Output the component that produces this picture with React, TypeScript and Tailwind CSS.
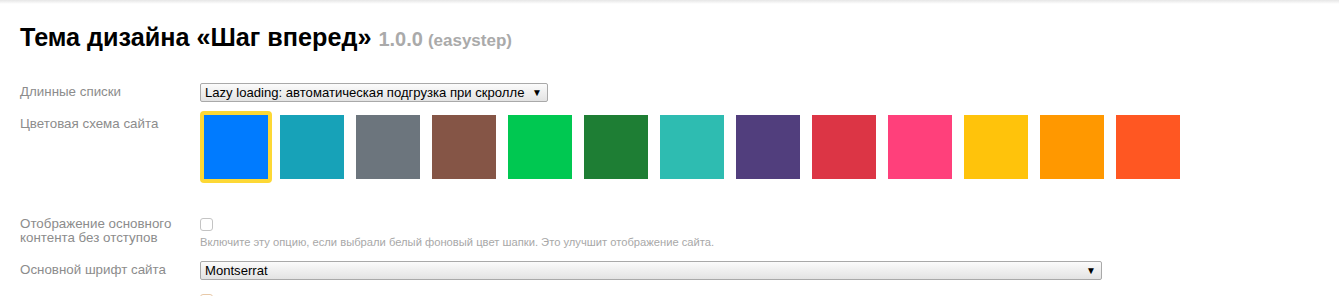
const colors = [
  '#007bff',
  '#17a2b8',
  '#6c757d',
  '#855546',
  '#00c851',
  '#1e7e34',
  '#2ebcb1',
  '#513e7d',
  '#dc3545',
  '#ff407b',
  '#ffc30b',
  '#ff9800',
  '#ff5722',
];

const FakeSelect = ({ value, className }: { value: string; className: string }) => (
  <div
    className={`flex items-center justify-between h-[19px] pl-[4px] pr-[5px] border border-[#a9a9a9] rounded-[2px] bg-gradient-to-b from-[#fbfbfb] to-[#e3e3e3] text-[13.1px] leading-none text-black whitespace-nowrap ${className}`}
  >
    <span>{value}</span>
    <span className="text-[10px] leading-none">▼</span>
  </div>
);

const Checkbox = ({ className = '' }: { className?: string }) => (
  <div className={`w-[13px] h-[13px] border border-[#c4c4c4] rounded-[3px] bg-white ${className}`} />
);

export default function App() {
  return (
    <div className="w-[1339px] h-[296px] overflow-hidden bg-white font-['Liberation_Sans',Arial,sans-serif]">
      <div className="h-[4px] bg-gradient-to-b from-[#e6e6e6] to-white" />
      <div className="pl-5">
        <h1 className="mt-[18px] flex items-baseline text-[25.2px] leading-[30px] font-bold text-black">
          Тема дизайна «Шаг вперед»
          <span className="ml-[7px] text-[20px] text-[#aaaaaa]">1.0.0</span>
          <span className="ml-[5px] text-[17px] text-[#aaaaaa]">(easystep)</span>
        </h1>

        <div className="mt-[27px] flex items-start">
          <div className="w-[180px] pt-[1px] text-[13.35px] leading-[15px] text-[#8c8c8c]">Длинные списки</div>
          <FakeSelect value="Lazy loading: автоматическая подгрузка при скролле" className="w-[348px]" />
        </div>

        <div className="mt-[9px] flex items-start">
          <div className="w-[180px] pt-[5px] text-[13.35px] leading-[15px] text-[#8c8c8c]">Цветовая схема сайта</div>
          <div className="flex gap-1">
            {colors.map((c, i) => (
              <div
                key={c}
                className={`w-[72px] h-[72px] border-4 rounded-[4px] ${i === 0 ? 'border-[#fdd835]' : 'border-transparent'}`}
              >
                <div className="w-full h-full" style={{ backgroundColor: c }} />
              </div>
            ))}
          </div>
        </div>

        <div className="mt-[34px] flex items-start">
          <div className="w-[180px] text-[13.35px] leading-[14px] text-[#8c8c8c]">
            Отображение основного
            <br />
            контента без отступов
          </div>
          <div>
            <Checkbox className="mt-[1px]" />
            <div className="mt-[4px] text-[11.2px] leading-[14px] text-[#a8a8a8]">
              Включите эту опцию, если выбрали белый фоновый цвет шапки. Это улучшит отображение сайта.
            </div>
          </div>
        </div>

        <div className="mt-[12px] flex items-start">
          <div className="w-[180px] pt-[1px] text-[13.35px] leading-[15px] text-[#8c8c8c]">Основной шрифт сайта</div>
          <FakeSelect value="Montserrat" className="w-[902px] h-[18px]" />
        </div>

        <div className="mt-[14px] flex">
          <div className="w-[180px]" />
          <Checkbox className="border-[#e8c9a8]" />
        </div>
      </div>
    </div>
  );
}
